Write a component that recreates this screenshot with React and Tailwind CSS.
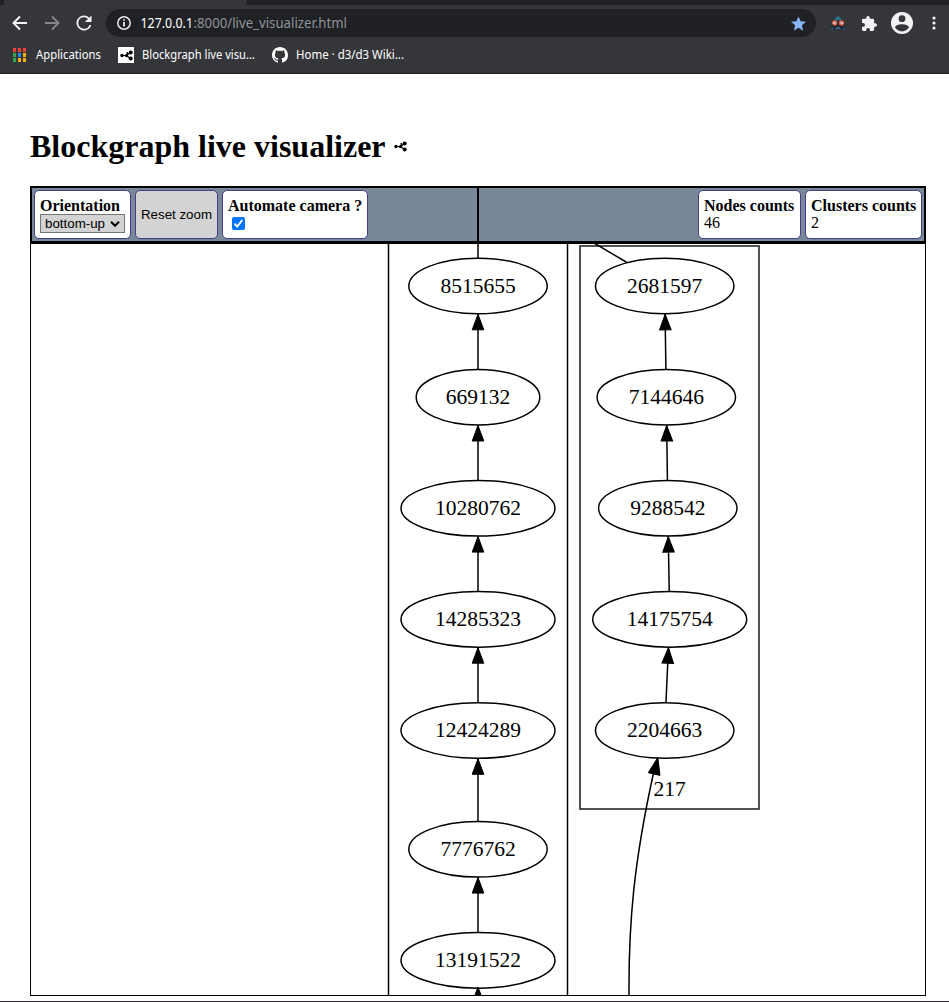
import React from "react";

const mainChain = [
  { label: "8515655", x: 478, y: 286, rx: 69.2 },
  { label: "669132", x: 478, y: 397.2, rx: 61.8 },
  { label: "10280762", x: 478, y: 508.3, rx: 77 },
  { label: "14285323", x: 478, y: 619.4, rx: 77 },
  { label: "12424289", x: 478, y: 730.5, rx: 77 },
  { label: "7776762", x: 478, y: 849.3, rx: 69.2 },
  { label: "13191522", x: 478, y: 960.4, rx: 77 },
];

const sideChain = [
  { label: "2681597", x: 664.7, y: 286, rx: 69.2 },
  { label: "7144646", x: 666.3, y: 397.2, rx: 69.2 },
  { label: "9288542", x: 667.8, y: 508.3, rx: 69.2 },
  { label: "14175754", x: 669.7, y: 619.4, rx: 77 },
  { label: "2204663", x: 664.7, y: 730.5, rx: 69.2 },
];

const RY = 27.8;

function Node({ label, x, y, rx }) {
  return (
    <g>
      <ellipse cx={x} cy={y} rx={rx} ry={RY} fill="none" stroke="#000" strokeWidth="1.5" />
      <text x={x} y={y + 6.7} textAnchor="middle" fontSize="21.5">{label}</text>
    </g>
  );
}

function Arrow({ x1, y1, x2, y2 }) {
  const angle = (Math.atan2(y2 - y1, x2 - x1) * 180) / Math.PI;
  return (
    <g>
      <line x1={x1} y1={y1} x2={x2} y2={y2} stroke="#000" strokeWidth="1.5" />
      <polygon points="0,0 -15.5,-5.8 -15.5,5.8" stroke="#000" transform={`translate(${x2} ${y2}) rotate(${angle})`} />
    </g>
  );
}

function Chain({ nodes }) {
  return (
    <g>
      {nodes.slice(1).map((n, i) => (
        <Arrow key={n.label} x1={n.x + (nodes[i].x - n.x) * 0.25} y1={n.y - RY} x2={nodes[i].x + (n.x - nodes[i].x) * 0.25} y2={nodes[i].y + RY + 0.5} />
      ))}
      {nodes.map((n) => <Node key={n.label} {...n} />)}
    </g>
  );
}

function Graph() {
  return (
    <svg className="block h-[751px] w-[894px]" viewBox="31 244 894 751" fontFamily="'Liberation Serif', serif">
      <path d="M388.5 240V1000M567.5 240V1000" stroke="#000" strokeWidth="1.5" />
      <rect x="580" y="246" width="179" height="563" fill="none" stroke="#333" strokeWidth="1.7" />
      <path d="M478 240V258M594 243L627 262.5" stroke="#000" strokeWidth="1.5" />
      <Chain nodes={mainChain} />
      <Chain nodes={sideChain} />
      <polygon points="478,987 472,1003 484,1003" stroke="#000" />
      <path d="M629 996C628.5 922 634 862 653.5 773" fill="none" stroke="#000" strokeWidth="1.5" />
      <polygon points="657.8,757.5 648.3,772.7 660,775.4" stroke="#000" />
      <text x="669.5" y="796" textAnchor="middle" fontSize="21.5">217</text>
    </svg>
  );
}

function BlockgraphIcon({ className }) {
  return (
    <svg className={className} viewBox="0 0 13 11">
      <path d="M2 5.5H7M6.5 5.5L10.5 2.5M7 6L10.5 8.5" stroke="#000" strokeWidth="1.2" fill="none" />
      <circle cx="2" cy="5.5" r="1.7" /><circle cx="6.5" cy="5.7" r="1.6" />
      <circle cx="10.7" cy="2.4" r="2" /><circle cx="10.7" cy="8.6" r="2" />
      <circle cx="7.3" cy="3" r="1" />
    </svg>
  );
}

function Toolbar() {
  return (
    <div className="flex h-9 items-center pl-3">
      <svg className="h-4 w-4" viewBox="0 0 16 16" fill="none" stroke="#f1f3f4" strokeWidth="2"><path d="M15 8H2M8 1.5L1.5 8L8 14.5" /></svg>
      <svg className="ml-4 h-4 w-4" viewBox="0 0 16 16" fill="none" stroke="#85868a" strokeWidth="2"><path d="M1 8h13M8 1.5L14.5 8L8 14.5" /></svg>
      <svg className="ml-4 h-4 w-4" viewBox="3.5 3.5 17 17" fill="#f1f3f4"><path d="M17.65 6.35A7.96 7.96 0 0 0 12 4a8 8 0 1 0 7.73 10h-2.08A6 6 0 1 1 12 6c1.66 0 3.14.69 4.22 1.78L13 11h7V4z" /></svg>
      <div className="ml-[14px] flex h-7 w-[710px] items-center rounded-full bg-[#202124] pl-[11px] pr-[10px]">
        <svg className="h-[14px] w-[14px]" viewBox="0 0 14 14" fill="none" stroke="#e8eaed" strokeWidth="1.5"><circle cx="7" cy="7" r="6.2" /><path d="M7 6v4.5M7 3.2v1.6" strokeWidth="1.8" /></svg>
        <svg className="ml-[9px] h-5 w-[300px] overflow-visible" fontFamily="'Noto Sans', sans-serif" fontSize="13.5">
          <text x="0.5" y="15" textLength="52.5" lengthAdjust="spacingAndGlyphs" fill="#fff">127.0.0.1</text>
          <text x="53.5" y="15" textLength="153.5" lengthAdjust="spacingAndGlyphs" fill="#8f9398">:8000/live_visualizer.html</text>
        </svg>
        <svg className="ml-auto h-[15px] w-[15px]" viewBox="2 2 20 19" fill="#8ab4f8"><path d="M12 17.27L18.18 21l-1.64-7.03L22 9.24l-7.19-.61L12 2 9.19 8.63 2 9.24l5.46 4.73L5.82 21z" /></svg>
      </div>
      <svg className="ml-[14px] h-4 w-4" viewBox="0 0 16 16">
        <path d="M2.5 8L4 3.5L8 .5L12 3.5L13.5 8L16 15H0z" fill="#1f2b36" />
        <path d="M4.2 5.5L5.2 3L8 .7L11 3L12 5.5z" fill="#29717e" />
        <path d="M1 15l1.5-4v4zM15 15l-1.5-4v4z" fill="#2e7180" />
        <circle cx="4.7" cy="8" r="2" fill="#fff" stroke="#e05a42" strokeWidth="1.3" />
        <circle cx="11.5" cy="8" r="2" fill="#fff" stroke="#e05a42" strokeWidth="1.3" />
        <circle cx="5" cy="8" r=".7" fill="#3b464d" /><circle cx="11.2" cy="8" r=".7" fill="#3b464d" />
        <path d="M6 14.3l.7-1.3h2.8l.7 1.3" fill="none" stroke="#5c91ad" />
      </svg>
      <svg className="ml-4 h-[15px] w-[15px]" viewBox="2 1 21 21" fill="#f1f3f4"><path d="M20.5 11H19V7a2 2 0 0 0-2-2h-4V3.5a2.5 2.5 0 0 0-5 0V5H4a2 2 0 0 0-2 2v3.8h1.5a2.7 2.7 0 0 1 0 5.4H2V20a2 2 0 0 0 2 2h3.8v-1.5a2.7 2.7 0 0 1 5.4 0V22H17a2 2 0 0 0 2-2v-4h1.5a2.5 2.5 0 0 0 0-5z" /></svg>
      <svg className="ml-[14px] h-[22px] w-[22px]" viewBox="0 0 22 22"><circle cx="11" cy="11" r="11" fill="#f1f3f4" /><circle cx="11" cy="6.7" r="3.4" fill="#35363a" /><path d="M4 15.6c0-2.2 4-3.4 7-3.4s7 1.2 7 3.4c-1.6 2.4-4 3.8-7 3.8s-5.4-1.4-7-3.8z" fill="#35363a" /></svg>
      <svg className="ml-[19px] h-[14px] w-1" viewBox="0 0 4 14" fill="#f1f3f4"><circle cx="2" cy="2" r="1.6" /><circle cx="2" cy="7" r="1.6" /><circle cx="2" cy="12" r="1.6" /></svg>
    </div>
  );
}

function BookmarkLabel({ width, children }) {
  return (
    <svg className="h-5 shrink-0 overflow-visible" width={width} fontFamily="'Noto Sans', sans-serif" fontSize="12" fill="#fff">
      <text x="0" y="14" textLength={width} lengthAdjust="spacingAndGlyphs">{children}</text>
    </svg>
  );
}

const appColors = [
  "bg-[#f44336]", "bg-[#f44336]", "bg-[#f44336]",
  "bg-[#34a853]", "bg-[#1a8cff]", "bg-[#fbb005]",
  "bg-[#34a853]", "bg-[#fbb005]", "bg-[#fbb005]",
];

function Bookmarks() {
  return (
    <div className="flex h-7 items-center pl-[13px]">
      <div className="grid grid-cols-3 gap-x-[2px] gap-y-px">
        {appColors.map((c, i) => <span key={i} className={`h-1 w-[3px] ${c}`} />)}
      </div>
      <div className="w-[10px]" />
      <BookmarkLabel width={65}>Applications</BookmarkLabel>
      <div className="ml-[17px] mr-2 flex h-4 w-4 items-center justify-center bg-white"><BlockgraphIcon className="h-[11px] w-[13px]" /></div>
      <BookmarkLabel width={113}>Blockgraph live visu...</BookmarkLabel>
      <svg className="ml-[17px] mr-2 h-4 w-4" viewBox="0 0 16 16" fill="#fff"><path d="M8 0C3.58 0 0 3.58 0 8c0 3.54 2.29 6.53 5.47 7.59.4.07.55-.17.55-.38 0-.19-.01-.82-.01-1.49-2.01.37-2.53-.49-2.69-.94-.09-.23-.48-.94-.82-1.13-.28-.15-.68-.52-.01-.53.63-.01 1.08.58 1.23.82.72 1.21 1.87.87 2.33.66.07-.52.28-.87.51-1.07-1.78-.2-3.64-.89-3.64-3.95 0-.87.31-1.59.82-2.15-.08-.2-.36-1.02.08-2.12 0 0 .67-.21 2.2.82.64-.18 1.32-.27 2-.27s1.36.09 2 .27c1.53-1.04 2.2-.82 2.2-.82.44 1.1.16 1.92.08 2.12.51.56.82 1.27.82 2.15 0 3.07-1.87 3.75-3.65 3.95.29.25.54.73.54 1.48 0 1.07-.01 1.93-.01 2.2 0 .21.15.46.55.38A8.01 8.01 0 0 0 16 8c0-4.42-3.58-8-8-8z" /></svg>
      <BookmarkLabel width={108}>Home · d3/d3 Wiki...</BookmarkLabel>
    </div>
  );
}

function Panel({ className, title, children }) {
  return (
    <div className={`h-[49px] shrink-0 rounded-[5px] border border-[#483d8b] bg-white pl-[5px] pt-[6px] ${className}`}>
      <div className="whitespace-nowrap text-[16px] font-bold leading-[17px]">{title}</div>
      {children}
    </div>
  );
}

function Controls() {
  return (
    <div className="flex h-[57px] gap-1 border-2 border-black bg-[#778899] p-[2px]">
      <Panel className="w-[97px]" title="Orientation">
        <div className="flex h-[19px] w-[85px] items-center justify-between border border-[#767676] bg-[#d3d3d3] pl-1 pr-1 font-['Liberation_Sans',sans-serif] text-[13.33px] leading-none">
          <span>bottom-up</span>
          <svg className="h-[6px] w-[10px] shrink-0" viewBox="0 0 10 6" fill="none" stroke="#000" strokeWidth="2"><path d="M1 .8L5 4.8L9 .8" /></svg>
        </div>
      </Panel>
      <button className="h-[49px] w-[83px] shrink-0 whitespace-nowrap rounded-[5px] border border-[#483d8b] bg-[#d3d3d3] font-['Liberation_Sans',sans-serif] text-[13.33px]">Reset zoom</button>
      <Panel className="w-[146px]" title="Automate camera ?">
        <div className="ml-1 mt-[3px] flex h-[13px] w-[13px] items-center justify-center rounded-[2px] bg-[#0075ff]">
          <svg className="h-[11px] w-[11px]" viewBox="0 0 11 11" fill="none" stroke="#fff" strokeWidth="2"><path d="M1.5 5.8L4.2 8.5L9.3 2" /></svg>
        </div>
      </Panel>
      <div className="flex-1" />
      <Panel className="w-[103px]" title="Nodes counts"><div className="text-[16px] leading-[18px]">46</div></Panel>
      <Panel className="w-[117px]" title="Clusters counts"><div className="text-[16px] leading-[18px]">2</div></Panel>
    </div>
  );
}

export default function App() {
  return (
    <div className="flex h-[1002px] w-[949px] flex-col overflow-hidden bg-white font-['Liberation_Serif',serif] text-black">
      <header className="h-[74px] shrink-0 border-b border-[#202124] bg-[#35363a]">
        <div className="flex h-[5px] justify-between bg-[#202124]">
          <div className="ml-1 h-[5px] w-[243px] rounded-b-[3px] bg-[#35363a]" />
        </div>
        <Toolbar />
        <Bookmarks />
      </header>
      <main className="h-[927px] shrink-0 pl-[30px] pt-[54px]">
        <div className="flex h-[58px] w-[896px] items-start">
          <h1 className="whitespace-nowrap text-[32px] font-bold leading-[36px]">Blockgraph live visualizer</h1>
          <BlockgraphIcon className="ml-2 mt-[13px] h-[11px] w-[13px]" />
        </div>
        <div className="relative w-[896px]">
          <Controls />
          <div className="absolute left-[447px] top-0 h-[57px] w-[2px] bg-black" />
          <div className="h-[753px] border border-black"><Graph /></div>
        </div>
      </main>
      <footer className="h-px shrink-0 bg-[#30273a]" />
    </div>
  );
}
